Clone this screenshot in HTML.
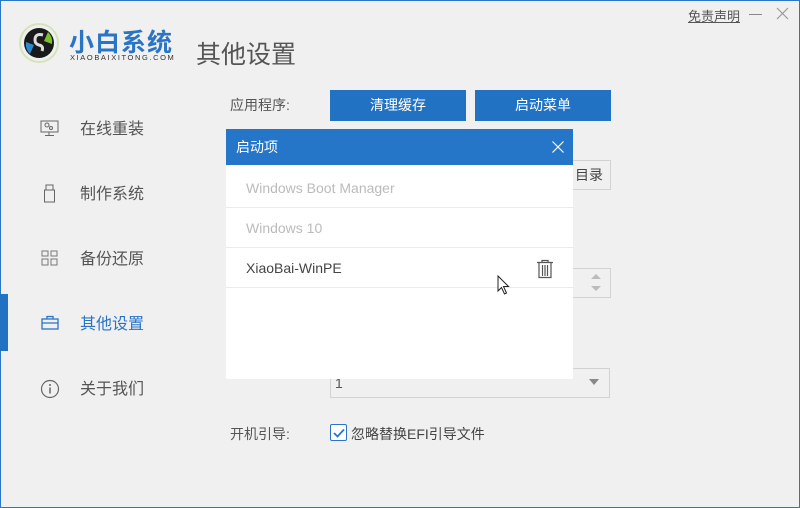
<!DOCTYPE html>
<html><head><meta charset="utf-8"><style>
*{margin:0;padding:0;box-sizing:border-box}
body{width:800px;height:508px;overflow:hidden;background:#f0f0f0;font-family:"Liberation Sans","Noto Sans CJK SC",sans-serif;position:relative;color:#555}
.frame{position:absolute;inset:0;border:1px solid #2a77c9}
.a{position:absolute}
.nav{font-size:16px;color:#555}
.btn{position:absolute;background:#2272c3;color:#fff;font-size:14px;text-align:center;line-height:31px;height:31px}
.box{position:absolute;border:1px solid #d2d2d2;background:#f0f0f0}
.row{position:absolute;left:0;width:347px;height:40px;border-bottom:1px solid #ebebeb;font-size:14px;line-height:40px;padding-left:20px}
</style></head><body>
<div class="frame"></div>
<svg class="a" style="left:18px;top:22px" width="42" height="42" viewBox="0 0 42 42">
<circle cx="21" cy="21" r="19" fill="none" stroke="#d5e4b8" stroke-width="2"/>
<circle cx="21" cy="21" r="15" fill="#1a1a1a"/>
<path d="M30 10 a14 14 0 0 1 4 12 l-8 -3z" fill="#7cc12a"/>
<path d="M12 32 a14 14 0 0 1 -4 -12 l8 3z" fill="#2a8ad0"/>
<path d="M25 13 q-8 -2 -8 5 q0 4 4 5 q5 1 3 6" fill="none" stroke="#ddd" stroke-width="3"/>
</svg>
<div class="a" style="left:69px;top:23px;font-size:25px;color:#2a74c6;font-weight:bold;letter-spacing:1px">小白系统</div>
<div class="a" style="left:70px;top:53px;font-size:7.5px;color:#333;letter-spacing:1.6px">XIAOBAIXITONG.COM</div>
<div class="a" style="left:196px;top:35px;font-size:25px;color:#555">其他设置</div>
<div class="a" style="left:688px;top:6px;font-size:13px;color:#555;text-decoration:underline">免责声明</div>
<div class="a" style="left:749px;top:14px;width:13px;height:1px;background:#888"></div>
<svg class="a" style="left:776px;top:7px" width="13" height="13"><path d="M1 1L12 12M12 1L1 12" stroke="#999" stroke-width="1.2"/></svg>
<div class="a" style="left:0;top:294px;width:8px;height:57px;background:#2272c3"></div>
<svg class="a" style="left:40px;top:120px" width="20" height="18"><rect x="1" y="1" width="17" height="11" fill="none" stroke="#666"/><circle cx="7" cy="5" r="2" fill="none" stroke="#666"/><circle cx="11" cy="8" r="1.5" fill="none" stroke="#666"/><path d="M9 12v3M5 15.5h9" stroke="#666"/></svg>
<div class="a nav" style="left:80px;top:115px">在线重装</div>
<svg class="a" style="left:44px;top:184px" width="14" height="20"><rect x="2" y="1" width="7" height="5" fill="none" stroke="#666"/><rect x="0.5" y="6" width="10" height="12" fill="none" stroke="#666"/></svg>
<div class="a nav" style="left:80px;top:180px">制作系统</div>
<svg class="a" style="left:41px;top:250px" width="18" height="18"><rect x="1" y="1" width="6" height="5" fill="none" stroke="#777"/><rect x="10" y="1" width="6" height="5" fill="none" stroke="#777"/><rect x="1" y="9" width="6" height="6" fill="none" stroke="#777"/><rect x="10" y="9" width="6" height="6" fill="none" stroke="#777"/></svg>
<div class="a nav" style="left:80px;top:245px">备份还原</div>
<svg class="a" style="left:41px;top:315px" width="18" height="16"><rect x="1" y="4" width="16" height="10" fill="none" stroke="#2a74c6" stroke-width="1.3"/><path d="M6 4V1.5h6V4M1 8h16" stroke="#2a74c6" fill="none" stroke-width="1.3"/></svg>
<div class="a nav" style="left:80px;top:310px;color:#2a74c6">其他设置</div>
<svg class="a" style="left:40px;top:379px" width="20" height="20"><circle cx="10" cy="10" r="8.5" fill="none" stroke="#666" stroke-width="1.2"/><circle cx="10" cy="6" r="1" fill="#666"/><path d="M10 8.5v6" stroke="#666" stroke-width="1.5"/></svg>
<div class="a nav" style="left:80px;top:375px">关于我们</div>
<div class="a" style="left:230px;top:95px;font-size:14px">应用程序:</div>
<div class="btn" style="left:330px;top:90px;width:136px">清理缓存</div>
<div class="btn" style="left:475px;top:90px;width:136px">启动菜单</div>
<div class="box" style="left:540px;top:160px;width:71px;height:30px;font-size:14px;line-height:28px;padding-left:34px;color:#444">目录</div>
<div class="box" style="left:540px;top:268px;width:71px;height:30px"></div>
<svg class="a" style="left:590px;top:273px" width="12" height="20"><path d="M1 6L6 1L11 6z M1 13L6 18L11 13z" fill="#bbb"/></svg>
<div class="box" style="left:330px;top:368px;width:280px;height:30px;font-size:14px;line-height:28px;padding-left:4px;color:#555">1</div>
<svg class="a" style="left:589px;top:379px" width="10" height="7"><path d="M0 0H10L5 6z" fill="#888"/></svg>
<div class="a" style="left:230px;top:424px;font-size:14px">开机引导:</div>
<div class="a" style="left:330px;top:424px;width:17px;height:17px;border:1px solid #2a74c6;border-radius:2px;background:#fff"></div>
<svg class="a" style="left:333px;top:428px" width="12" height="10"><path d="M1 5L4.5 8.5L11 1.5" fill="none" stroke="#2a74c6" stroke-width="1.8"/></svg>
<div class="a" style="left:351px;top:424px;font-size:14px;color:#444">忽略替换EFI引导文件</div>
<div class="a" style="left:226px;top:129px;width:347px;height:250px;background:#fff">
<div style="height:36px;background:#2576c9;color:#fff;font-size:14px;line-height:36px;padding-left:10px">启动项</div>
<svg class="a" style="left:326px;top:12px" width="12" height="12"><path d="M0.5 0.5L11.5 11.5M11.5 0.5L0.5 11.5" stroke="#fff" stroke-width="1.2"/></svg>
<div class="row" style="top:36px;height:43px;line-height:46px;color:#bbb">Windows Boot Manager</div>
<div class="row" style="top:79px;color:#bbb">Windows 10</div>
<div class="row" style="top:119px;color:#444">XiaoBai-WinPE</div>
<svg class="a" style="left:309px;top:130px" width="20" height="20"><path d="M2 3.5H18M7 3.5V1.5H13V3.5M4 3.5V18.5H16V3.5M7.5 6V17M10 6V17M12.5 6V17" fill="none" stroke="#555" stroke-width="1.2"/></svg>
</div>
<svg class="a" style="left:497px;top:275px" width="13" height="20"><path d="M1 1V16L4.5 12.5L7.5 19L9.5 18L6.5 11.5H11.5z" fill="#fff" stroke="#222" stroke-width="1"/></svg>
</body></html>
